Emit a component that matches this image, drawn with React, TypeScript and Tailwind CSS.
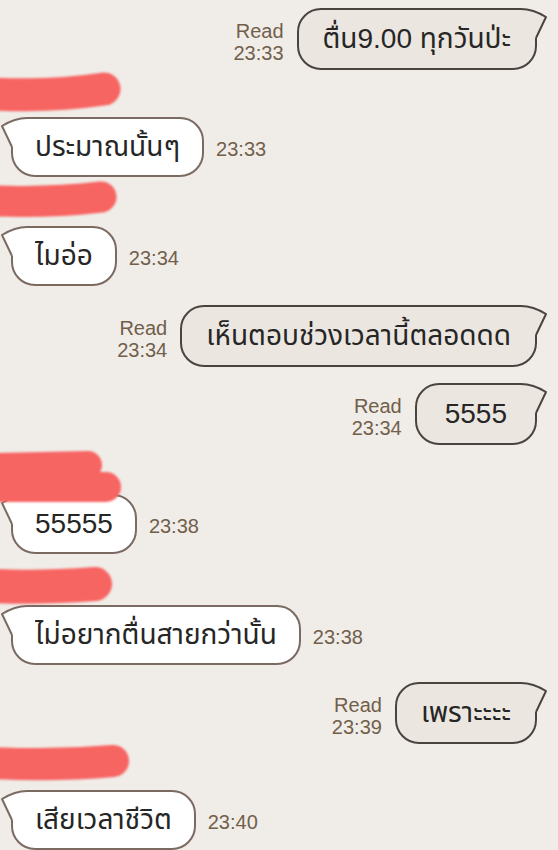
import React from "react";

const thai = { fontFamily: "'Liberation Sans', 'Noto Sans Thai', 'Noto Sans', sans-serif" };

function Tail({ left, fill, stroke }: { left?: boolean; fill: string; stroke: string }) {
  return (
    <svg
      viewBox="0 0 35 34"
      className={
        left
          ? "absolute top-0 left-[-11px] w-[35px] h-[34px] -scale-x-100"
          : "absolute top-0 right-[-11px] w-[35px] h-[34px]"
      }
    >
      <path d="M0 1 L8 1 Q20 1 33 9 L23 30 L0 30 Z" fill={fill} />
      <path d="M0 1 L8 1 Q20 1 33 9 L23 30" fill="none" stroke={stroke} strokeWidth="2" strokeLinejoin="round" />
    </svg>
  );
}

function Right({ text, time, mt, px }: { text: string; time: string; mt: string; px?: string }) {
  return (
    <div className={`flex justify-end items-end gap-[13px] pr-[21px] ${mt}`}>
      <div className="mb-[6px] text-right text-[20px] leading-[22px] text-[#715f4c]" style={thai}>
        <div>Read</div>
        <div>{time}</div>
      </div>
      <div className="relative">
        <div
          className={`flex h-[62px] items-center rounded-[24px] border-2 border-[#4a4440] bg-[#ebe6e0] ${px ?? "px-[24px]"} text-[28px] text-[#262626]`}
          style={thai}
        >
          {text}
        </div>
        <Tail fill="#ebe6e0" stroke="#4a4440" />
      </div>
    </div>
  );
}

function Left({ text, time }: { text: string; time: string }) {
  return (
    <div className="flex items-center gap-[12px] pl-[11px]">
      <div className="relative">
        <div
          className="flex h-[60px] items-center rounded-[24px] border-2 border-[#7a6a62] bg-white px-[22px] text-[28px] text-[#262626]"
          style={thai}
        >
          {text}
        </div>
        <Tail left fill="#ffffff" stroke="#7a6a62" />
      </div>
      <div className="mt-[3px] text-[20px] text-[#715f4c]" style={thai}>
        {time}
      </div>
    </div>
  );
}

function Name({ h, children }: { h: string; children: React.ReactNode }) {
  return (
    <div className={`relative ${h}`}>
      <svg viewBox="0 0 140 60" className="absolute left-0 top-0 z-10 w-[140px] h-[60px] blur-[1px] overflow-visible">
        {children}
      </svg>
    </div>
  );
}

const red = "#f76563";

export default function App() {
  return (
    <div className="w-[558px] min-h-[850px] overflow-hidden bg-[#f0ece7]">
      <div className="flex flex-col pt-[8px]">
        <Right text="ตื่น9.00 ทุกวันป่ะ" time="23:33" mt="" />

        <Name h="h-[47px]">
          <path d="M-6 24 Q50 27 104 19" stroke={red} strokeWidth="33" strokeLinecap="round" fill="none" />
        </Name>
        <Left text="ประมาณนั้นๆ" time="23:33" />

        <Name h="h-[49px]">
          <path d="M-6 24 Q50 26 101 20" stroke={red} strokeWidth="31" strokeLinecap="round" fill="none" />
        </Name>
        <Left text="ไมอ่อ" time="23:34" />

        <Right text="เห็นตอบช่วงเวลานี้ตลอดดด" time="23:34" mt="mt-[19px]" />
        <Right text="5555" time="23:34" mt="mt-[16px]" px="px-[28px]" />

        <Name h="h-[49px]">
          <path d="M-6 22 L88 20" stroke={red} strokeWidth="28" strokeLinecap="round" fill="none" />
          <path d="M-6 42 L106 42" stroke={red} strokeWidth="30" strokeLinecap="round" fill="none" />
        </Name>
        <Left text="55555" time="23:38" />

        <Name h="h-[51px]">
          <path d="M-6 32 Q40 34 95 30" stroke={red} strokeWidth="34" strokeLinecap="round" fill="none" />
        </Name>
        <Left text="ไม่อยากตื่นสายกว่านั้น" time="23:38" />

        <Right text="เพราะะะะ" time="23:39" mt="mt-[17px]" />

        <Name h="h-[46px]">
          <path d="M-6 19 Q55 22 113 17" stroke={red} strokeWidth="32" strokeLinecap="round" fill="none" />
        </Name>
        <Left text="เสียเวลาชีวิต" time="23:40" />
      </div>
    </div>
  );
}
